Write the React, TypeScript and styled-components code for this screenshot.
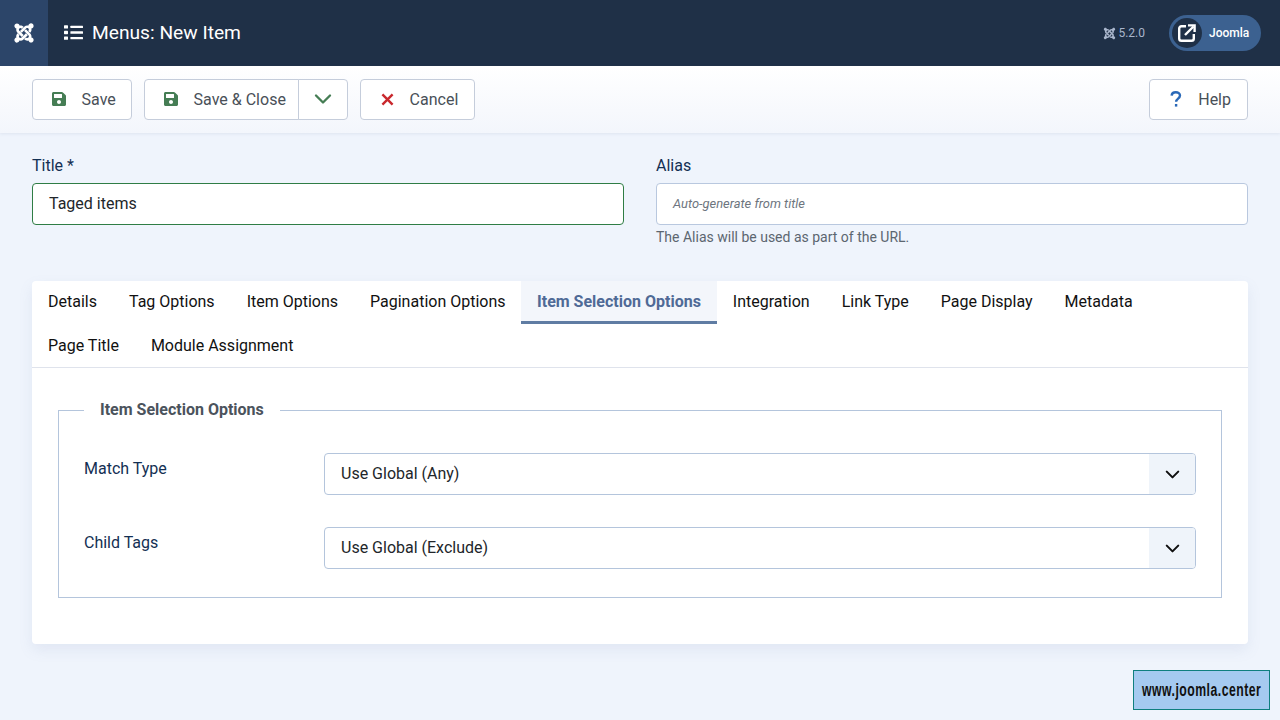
import React from 'react';
import styled, { createGlobalStyle } from 'styled-components';
import { FaJoomla, FaSave } from 'react-icons/fa';
import { ChevronDown } from 'lucide-react';

const GlobalStyle = createGlobalStyle`
  html, body {
    margin: 0;
    padding: 0;
    background: #eff4fc;
    font-family: Roboto, "Liberation Sans", sans-serif;
    font-size: 16px;
    color: #22262a;
  }
  * { box-sizing: border-box; }
`;

const tabs = [
  'Details',
  'Tag Options',
  'Item Options',
  'Pagination Options',
  'Item Selection Options',
  'Integration',
  'Link Type',
  'Page Display',
  'Metadata',
  'Page Title',
  'Module Assignment',
];

const ListIcon = () => (
  <svg width="19" height="15" viewBox="0 0 19 15" fill="currentColor">
    <rect x="0" y="0.2" width="4" height="3.4" rx="0.6" />
    <rect x="0" y="5.8" width="4" height="3.4" rx="0.6" />
    <rect x="0" y="11.4" width="4" height="3.4" rx="0.6" />
    <rect x="6.4" y="0.7" width="12.6" height="2.4" rx="0.5" />
    <rect x="6.4" y="6.3" width="12.6" height="2.4" rx="0.5" />
    <rect x="6.4" y="11.9" width="12.6" height="2.4" rx="0.5" />
  </svg>
);

const ExternalIcon = () => (
  <svg width="20" height="20" viewBox="0 0 20 20" fill="none" stroke="currentColor" strokeWidth="2.4">
    <path d="M9 3.2H4.5A2.3 2.3 0 0 0 2.2 5.5v10a2.3 2.3 0 0 0 2.3 2.3h10a2.3 2.3 0 0 0 2.3-2.3V11" />
    <path d="M8 12 L16.5 3.5" />
    <path d="M11 2.4h6.6V9" />
  </svg>
);

const HelpIcon = () => (
  <svg width="12" height="16" viewBox="0 0 12 16" fill="none" stroke="currentColor" strokeWidth="2.4">
    <path d="M1.6 4.6C1.8 2.6 3.5 1.2 5.8 1.2c2.4 0 4.2 1.4 4.2 3.4 0 3-3.9 3-3.9 6.2" />
    <path d="M6.1 13v2.6" />
  </svg>
);

const CloseIcon = () => (
  <svg width="13" height="13" viewBox="0 0 13 13" fill="none" stroke="currentColor" strokeWidth="2.4">
    <path d="M1.4 1.4 L11.6 11.6 M11.6 1.4 L1.4 11.6" />
  </svg>
);

const App: React.FC = () => {
  return (
    <Page>
      <GlobalStyle />
      <Header>
        <LogoBox>
          <FaJoomla />
        </LogoBox>
        <PageTitle>
          <ListIcon />
          <span>Menus: New Item</span>
        </PageTitle>
        <Version>
          <FaJoomla />
          5.2.0
        </Version>
        <UserPill>
          <UserIcon>
            <ExternalIcon />
          </UserIcon>
          <span>Joomla</span>
        </UserPill>
      </Header>

      <Toolbar>
        <SaveButton>
          <IconSlot $color="#457d54">
            <FaSave />
          </IconSlot>
          Save
        </SaveButton>
        <SplitGroup>
          <SplitMain>
            <IconSlot $color="#457d54">
              <FaSave />
            </IconSlot>
            Save &amp; Close
          </SplitMain>
          <SplitToggle>
            <ChevronDown size={28} strokeWidth={2} />
          </SplitToggle>
        </SplitGroup>
        <ToolButton>
          <IconSlot $color="#c9282d">
            <CloseIcon />
          </IconSlot>
          Cancel
        </ToolButton>
        <HelpButton>
          <IconSlot $color="#2a69b8">
            <HelpIcon />
          </IconSlot>
          Help
        </HelpButton>
      </Toolbar>

      <Content>
        <TitleRow>
          <Field>
            <FieldLabel>Title *</FieldLabel>
            <TitleInput>Taged items</TitleInput>
          </Field>
          <Field>
            <FieldLabel>Alias</FieldLabel>
            <AliasInput>Auto-generate from title</AliasInput>
            <FieldHint>The Alias will be used as part of the URL.</FieldHint>
          </Field>
        </TitleRow>

        <Card>
          <TabBar>
            {tabs.map((tab) => (
              <Tab key={tab} $active={tab === 'Item Selection Options'}>
                {tab}
              </Tab>
            ))}
          </TabBar>
          <TabBody>
            <Fieldset>
              <Legend>Item Selection Options</Legend>
              <ControlRow>
                <ControlLabel>Match Type</ControlLabel>
                <Select>
                  <SelectValue>Use Global (Any)</SelectValue>
                  <SelectArrow>
                    <ChevronDown size={23} strokeWidth={2.2} />
                  </SelectArrow>
                </Select>
              </ControlRow>
              <ControlRow>
                <ControlLabel>Child Tags</ControlLabel>
                <Select>
                  <SelectValue>Use Global (Exclude)</SelectValue>
                  <SelectArrow>
                    <ChevronDown size={23} strokeWidth={2.2} />
                  </SelectArrow>
                </Select>
              </ControlRow>
            </Fieldset>
          </TabBody>
        </Card>
      </Content>

      <Watermark>
        <span>www.joomla.center</span>
      </Watermark>
    </Page>
  );
};

const Page = styled.div`
  position: relative;
  width: 1280px;
  height: 720px;
  overflow: hidden;
  background: #eff4fc;
`;

const Header = styled.header`
  height: 66px;
  display: flex;
  align-items: center;
  background: #1f3047;
  color: #fff;
  padding-right: 19px;
`;

const LogoBox = styled.div`
  width: 48px;
  height: 66px;
  display: flex;
  align-items: center;
  justify-content: center;
  background: #2c4569;
  font-size: 22px;
`;

const PageTitle = styled.div`
  display: flex;
  align-items: center;
  gap: 9px;
  margin: 0 auto 2px 16px;
  font-size: 19.2px;
  font-weight: 400;
`;

const Version = styled.div`
  display: flex;
  align-items: center;
  gap: 2px;
  font-size: 12px;
  color: #a9b6cc;
  margin-right: 24px;

  svg {
    font-size: 13px;
  }
`;

const UserPill = styled.div`
  width: 92px;
  height: 36px;
  display: flex;
  align-items: center;
  gap: 7px;
  padding-left: 3px;
  border-radius: 18px;
  background: #3c6190;
  font-size: 12px;
  font-weight: 500;
`;

const UserIcon = styled.div`
  width: 30px;
  height: 30px;
  display: flex;
  align-items: center;
  justify-content: center;
  border-radius: 50%;
  background: #1f3047;
`;

const Toolbar = styled.div`
  height: 67px;
  display: flex;
  align-items: center;
  gap: 12px;
  padding: 0 32px 1px;
  background: linear-gradient(180deg, #ffffff 0%, #f3f6fc 100%);
  box-shadow: 0 1px 3px rgba(100, 120, 160, 0.12);
`;

const ToolButton = styled.div`
  height: 41px;
  display: flex;
  align-items: center;
  padding: 0 16px 0 0;
  background: #fff;
  border: 1px solid #c5cddb;
  border-radius: 4px;
  color: #495057;
  font-size: 16px;
`;

const SaveButton = styled(ToolButton)`
  width: 100px;
  padding-right: 0;
`;

const HelpButton = styled(ToolButton)`
  margin-left: auto;
`;

const IconSlot = styled.span<{ $color: string }>`
  width: 48.6px;
  padding-left: 4px;
  display: flex;
  justify-content: center;
  color: ${(props) => props.$color};
  font-size: 16px;
`;

const SplitGroup = styled.div`
  display: flex;
`;

const SplitMain = styled(ToolButton)`
  width: 155px;
  padding-right: 0;
  border-radius: 4px 0 0 4px;
`;

const SplitToggle = styled(ToolButton)`
  width: 50px;
  justify-content: center;
  padding: 0;
  margin-left: -1px;
  border-radius: 0 4px 4px 0;
  color: #457d54;
`;

const Content = styled.main`
  padding: 20px 32px 0;
`;

const TitleRow = styled.div`
  display: grid;
  grid-template-columns: 592px 592px;
  gap: 32px;
  height: 128px;
`;

const Field = styled.div`
  display: flex;
  flex-direction: column;
`;

const FieldLabel = styled.div`
  height: 30px;
  padding-top: 1px;
  line-height: 24px;
  color: #132f53;
`;

const TitleInput = styled.div`
  height: 42px;
  display: flex;
  align-items: center;
  padding: 0 16px 2px;
  background: #fff;
  border: 1px solid #2f7d45;
  border-radius: 4px;
  color: #22262a;
`;

const AliasInput = styled(TitleInput)`
  padding-bottom: 1px;
  border-color: #b9c8df;
  font-size: 12.9px;
  font-style: italic;
  color: #6d757e;
`;

const FieldHint = styled.div`
  margin-top: 2px;
  font-size: 14px;
  line-height: 20px;
  color: #5c6670;
`;

const Card = styled.section`
  height: 363px;
  background: #fff;
  border-radius: 4px;
  box-shadow: 0 6px 14px rgba(120, 140, 180, 0.12);
`;

const TabBar = styled.div`
  display: flex;
  flex-wrap: wrap;
  border-bottom: 1px solid #dfe3ec;
`;

const Tab = styled.div<{ $active?: boolean }>`
  height: 43px;
  padding: 0 16px 2px;
  display: flex;
  align-items: center;
  color: ${(props) => (props.$active ? '#4f6a96' : '#111')};
  background: ${(props) => (props.$active ? '#f3f6fb' : 'transparent')};
  font-weight: ${(props) => (props.$active ? 700 : 400)};
  margin-left: ${(props) => (props.$active ? '-0.5px' : '0')};
  border-bottom: 3px solid ${(props) => (props.$active ? '#5f7ca3' : 'transparent')};
  border-top: 3px solid transparent;

  &:nth-child(n + 10) {
    padding-bottom: 0;
  }
`;

const TabBody = styled.div`
  padding: 32px 26px 0;
`;

const Fieldset = styled.fieldset`
  margin: 0;
  height: 198px;
  padding: 33px 25px 0;
  border: 1px solid #b4c5dc;
`;

const Legend = styled.legend`
  padding: 0 16px;
  font-size: 16px;
  font-weight: 700;
  color: #4b535c;
  line-height: 20px;
`;

const ControlRow = styled.div`
  display: flex;
  margin-bottom: 32px;
`;

const ControlLabel = styled.div`
  width: 240px;
  padding-top: 6px;
  line-height: 20px;
  color: #132f53;
`;

const Select = styled.div`
  width: 872px;
  height: 42px;
  display: flex;
  background: #fff;
  border: 1px solid #b4c5dc;
  border-radius: 4px;
  overflow: hidden;
`;

const SelectValue = styled.div`
  flex: 1;
  display: flex;
  align-items: center;
  padding: 0 0 2px 16px;
  color: #22262a;
`;

const SelectArrow = styled.div`
  width: 46px;
  display: flex;
  align-items: center;
  justify-content: center;
  background: #eff4fa;
  color: #111;
`;

const Watermark = styled.div`
  position: absolute;
  left: 1133px;
  top: 670px;
  width: 137px;
  height: 40px;
  display: flex;
  align-items: center;
  justify-content: center;
  background: #a5caf0;
  border: 1px solid #0f7f7f;
  color: #111;
  font-family: "Liberation Sans", sans-serif;
  font-size: 18px;
  font-weight: 700;
  letter-spacing: 0.7px;
  white-space: nowrap;

  span {
    display: block;
    transform: scaleX(0.68);
  }
`;

export default App;
